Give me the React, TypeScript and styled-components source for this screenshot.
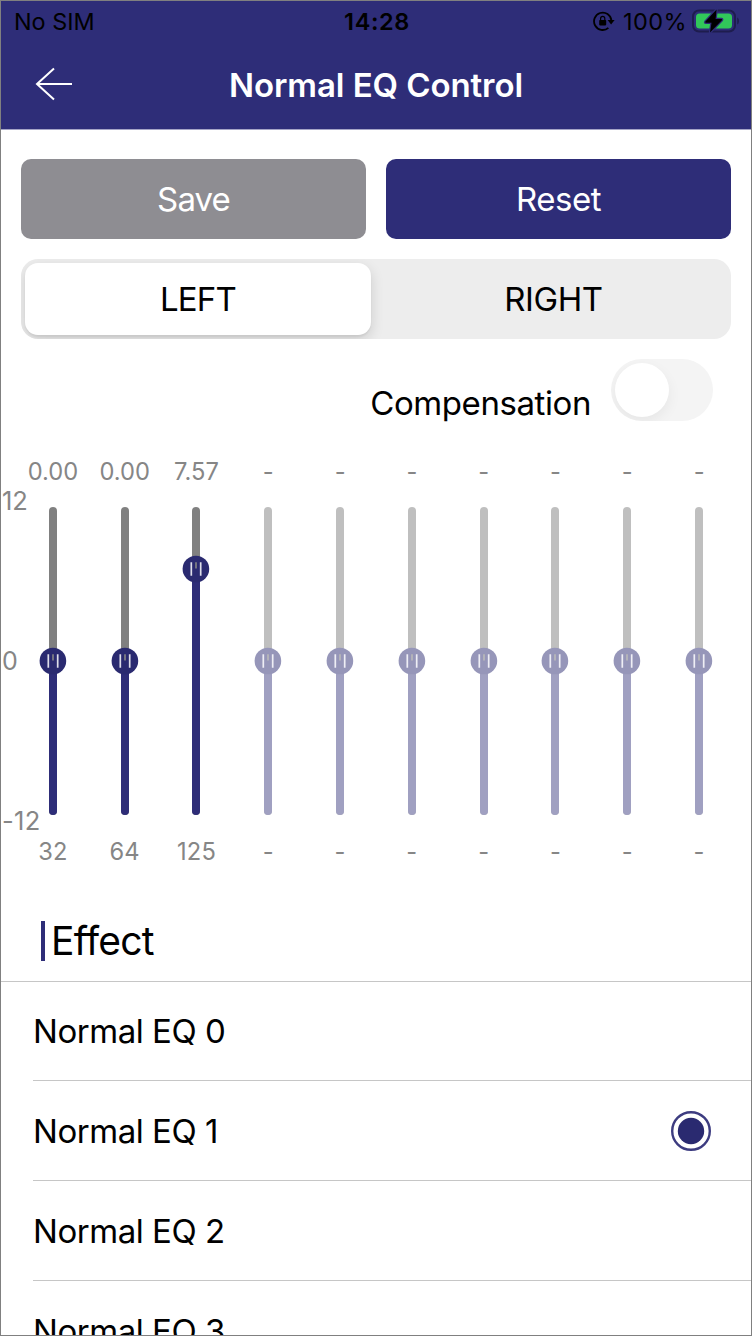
import React from "react";
import styled, { createGlobalStyle } from "styled-components";

const NAVY = "#2e2d78";

const GlobalStyle = createGlobalStyle`
  * { box-sizing: border-box; }
  html, body { margin: 0; background: #fff; }
  body { overflow: hidden; }
  button { font: inherit; border: 0; padding: 0; }
`;

const Label = styled.span<{ $size: number; $spacing?: number; $weight?: number }>`
  font-size: ${(p) => p.$size}px;
  letter-spacing: ${(p) => p.$spacing ?? 0}px;
  font-weight: ${(p) => p.$weight ?? 400};
  white-space: pre;
`;

const Screen = styled.main`
  width: 752px;
  height: 1336px;
  border: 1px solid #808080;
  overflow: hidden;
  display: flex;
  flex-direction: column;
  background: #fff;
  color: #000;
  font-family: Inter, "Liberation Sans", sans-serif;
`;

const Header = styled.header`
  flex: none;
  height: 129px;
  background: ${NAVY};
  border-bottom: 1px solid #a5a4c6;
`;

const StatusBar = styled.div`
  height: 40px;
  padding: 0 11px 0 13px;
  display: grid;
  grid-template-columns: 1fr auto 1fr;
  align-items: center;
`;

const StatusIcons = styled.div`
  display: flex;
  justify-content: flex-end;
  align-items: center;
  gap: 5px;
`;

const NavBar = styled.div`
  height: 88px;
  padding: 0 34px;
  display: grid;
  grid-template-columns: 60px 1fr 60px;
  align-items: center;
  justify-items: center;
  color: #fff;
`;

const BackButton = styled.button`
  justify-self: start;
  margin-bottom: 2px;
  background: none;
  display: flex;
`;

const Actions = styled.div`
  flex: none;
  margin: 29px 20px 0;
  height: 80px;
  display: grid;
  grid-template-columns: 1fr 1fr;
  gap: 20px;
`;

const ActionButton = styled.button<{ $color: string }>`
  padding-bottom: 1px;
  background: ${(p) => p.$color};
  color: #fff;
  border-radius: 10px;
`;

const Segments = styled.div`
  flex: none;
  margin: 20px 20px 0;
  height: 80px;
  padding: 4px 0 4px 4px;
  display: grid;
  grid-template-columns: 346px 1fr;
  border-radius: 17px;
  background: #ededed;
  overflow: hidden;
`;

const Segment = styled.button<{ $active?: boolean }>`
  padding: 0 0 1px ${(p) => (p.$active ? 0 : 5)}px;
  color: #000;
  background: ${(p) => (p.$active ? "#fff" : "transparent")};
  border-radius: 13px;
  box-shadow: ${(p) => (p.$active ? "0 5px 14px rgba(0,0,0,0.14), 0 2px 2px rgba(0,0,0,0.05)" : "none")};
`;

const CompensationRow = styled.div`
  flex: none;
  margin: 20px 38px 0 0;
  height: 62px;
  display: flex;
  justify-content: flex-end;
  gap: 20px;
`;

const CompensationText = styled.div`
  padding-top: 24px;
  line-height: 40px;
`;

const Toggle = styled.button`
  width: 102px;
  height: 62px;
  padding: 4px;
  border-radius: 31px;
  background: #f4f4f4;
  overflow: hidden;
`;

const ToggleKnob = styled.span`
  display: block;
  width: 54px;
  height: 54px;
  border-radius: 50%;
  background: #fff;
  box-shadow: 0 5px 14px rgba(0, 0, 0, 0.06);
`;

const Equalizer = styled.section`
  flex: none;
  margin-top: 35px;
  height: 410px;
  position: relative;
  color: #868686;
`;

const Bands = styled.div`
  padding: 0 16px;
  display: grid;
  grid-template-columns: repeat(10, 1fr);
`;

const Band = styled.div`
  display: flex;
  flex-direction: column;
  align-items: center;
`;

const BandText = styled.div`
  height: 32px;
  line-height: 32px;
`;

const Track = styled.div<{ $disabled: boolean }>`
  position: relative;
  width: 8px;
  height: 308px;
  margin: 19px 0 21px;
  border-radius: 4px;
  background: ${(p) => (p.$disabled ? "#bfbfbf" : "#808080")};
`;

const Fill = styled.div<{ $disabled: boolean }>`
  position: absolute;
  left: 0;
  right: 0;
  bottom: 0;
  border-radius: 0 0 4px 4px;
  background: ${(p) => (p.$disabled ? "#a0a0c1" : NAVY)};
`;

const Thumb = styled.svg`
  position: absolute;
  left: -10px;
  width: 28px;
  height: 28px;
`;

const AxisMark = styled.div<{ $top: number }>`
  position: absolute;
  left: 1px;
  top: ${(p) => p.$top}px;
  line-height: 32px;
`;

const EffectHeading = styled.h2`
  flex: none;
  margin: 55px 0 0 40px;
  height: 40px;
  padding: 0 0 2px 6px;
  border-left: 4px solid ${NAVY};
  display: flex;
  align-items: center;
  font-weight: 400;
`;

const PresetList = styled.ul`
  flex: none;
  margin: 20px 0 0;
  padding: 0;
  list-style: none;
  border-top: 1px solid #c6c6c6;
`;

const Preset = styled.li`
  margin-left: 32px;
  height: 100px;
  padding: 1px 40px 0 0;
  display: flex;
  align-items: center;
  justify-content: space-between;
  border-bottom: 1px solid #c6c6c6;
  &:first-child { height: 99px; padding-top: 0; }
`;

const ORIGIN = 154;
const PX_PER_DB = 12.15;

const bands: { freq: string; gain: number | null }[] = [
  { freq: "32", gain: 0 },
  { freq: "64", gain: 0 },
  { freq: "125", gain: 7.57 },
  ...Array.from({ length: 7 }, () => ({ freq: "-", gain: null })),
];

function SliderBand({ freq, gain }: { freq: string; gain: number | null }) {
  const off = gain === null;
  const y = ORIGIN - (gain ?? 0) * PX_PER_DB;
  return (
    <Band>
      <BandText><Label $size={23.7}>{off ? "-" : gain.toFixed(2)}</Label></BandText>
      <Track $disabled={off}>
        <Fill $disabled={off} style={{ top: y }} />
        <Thumb viewBox="0 0 28 28" style={{ top: y - 14 }}>
          <circle cx="13.9" cy="14" r="13.3" fill={off ? "#9696b9" : "#2a2a70"} />
          <path d="M9.3 7.3v13.4M18.7 7.3v13.4" stroke={off ? "#eeeef5" : "#dedee9"} strokeWidth="1.7" />
          <path d="M14 7.3V13.6" stroke={off ? "#b3b3b9" : "#747480"} strokeWidth="2" />
        </Thumb>
      </Track>
      <BandText><Label $size={23.7} $spacing={0.2}>{freq}</Label></BandText>
    </Band>
  );
}

function RotationLock() {
  return (
    <svg width="22" height="20" viewBox="0 0 22 20">
      <path d="M15.4 16.9A8.7 8.7 0 1 1 18.4 9.4" fill="none" stroke="#000" strokeWidth="1.8" />
      <path d="M14.6 9h7L18.1 13.4z" />
      <rect x="6.2" y="9" width="7" height="5.4" rx="0.8" />
      <path d="M7.6 9.2V7.5a2.1 2.1 0 0 1 4.2 0v1.7" fill="none" stroke="#000" strokeWidth="1.2" />
    </svg>
  );
}

function Battery() {
  return (
    <svg width="48" height="24" viewBox="0 0 48 24">
      <rect x="1" y="1.5" width="42" height="21" rx="6" fill="none" stroke="#1e1d4e" strokeWidth="2" />
      <path d="M45.2 8.5c2.4 1 2.4 6 0 7z" fill="#1e1d4e" />
      <rect x="4" y="4.5" width="36" height="15" rx="3.5" fill="#31c75a" />
      <path d="M24.6.4 13.4 12.6q-.8 1.1.5 1.2h5.6L18 23.6 29.9 11.2q.7-1.1-.6-1.2H23.6z" fill="#000" stroke={NAVY} strokeWidth="2.4" paintOrder="stroke" />
    </svg>
  );
}

export default function App() {
  return (
    <Screen>
      <GlobalStyle />
      <Header>
        <StatusBar>
          <Label $size={23.4}>No SIM</Label>
          <Label $size={23.5} $weight={600} $spacing={0.6}>14:28</Label>
          <StatusIcons>
            <RotationLock />
            <Label $size={23.5} $spacing={0.4} style={{ marginLeft: 3 }}>100%</Label>
            <Battery />
          </StatusIcons>
        </StatusBar>
        <NavBar>
          <BackButton aria-label="Back">
            <svg width="38" height="34" viewBox="0 0 38 34" fill="none" stroke="#fff" strokeWidth="2">
              <path d="M19 1.5 2 17l17 15.5M2 17h35" />
            </svg>
          </BackButton>
          <Label $size={33} $weight={600} $spacing={-0.08}>Normal EQ Control</Label>
        </NavBar>
      </Header>
      <Actions>
        <ActionButton $color="#8e8d92"><Label $size={33} $spacing={-0.9}>Save</Label></ActionButton>
        <ActionButton $color={NAVY}><Label $size={33} $spacing={-0.5}>Reset</Label></ActionButton>
      </Actions>
      <Segments>
        <Segment $active><Label $size={33} $spacing={-0.8}>LEFT</Label></Segment>
        <Segment><Label $size={33} $spacing={-0.4}>RIGHT</Label></Segment>
      </Segments>
      <CompensationRow>
        <CompensationText><Label $size={33} $spacing={-0.42}>Compensation</Label></CompensationText>
        <Toggle role="switch" aria-checked="false"><ToggleKnob /></Toggle>
      </CompensationRow>
      <Equalizer>
        <Bands>
          {bands.map((b, i) => <SliderBand key={i} {...b} />)}
        </Bands>
        <AxisMark $top={29}><Label $size={25.5}>12</Label></AxisMark>
        <AxisMark $top={189}><Label $size={25}>0</Label></AxisMark>
        <AxisMark $top={349}><Label $size={25.5} $spacing={0.3}>-12</Label></AxisMark>
      </Equalizer>
      <EffectHeading><Label $size={39} $spacing={-0.8}>Effect</Label></EffectHeading>
      <PresetList>
        {[0, 1, 2, 3].map((n) => (
          <Preset key={n}>
            <Label $size={33} $spacing={-0.46}>Normal EQ {n}</Label>
            {n === 1 && (
              <svg width="40" height="40" viewBox="0 0 40 40">
                <circle cx="20" cy="20" r="18.8" fill="none" stroke="#3d3c80" strokeWidth="2.4" />
                <circle cx="20" cy="20" r="13.2" fill="#2a2a70" />
              </svg>
            )}
          </Preset>
        ))}
      </PresetList>
    </Screen>
  );
}
